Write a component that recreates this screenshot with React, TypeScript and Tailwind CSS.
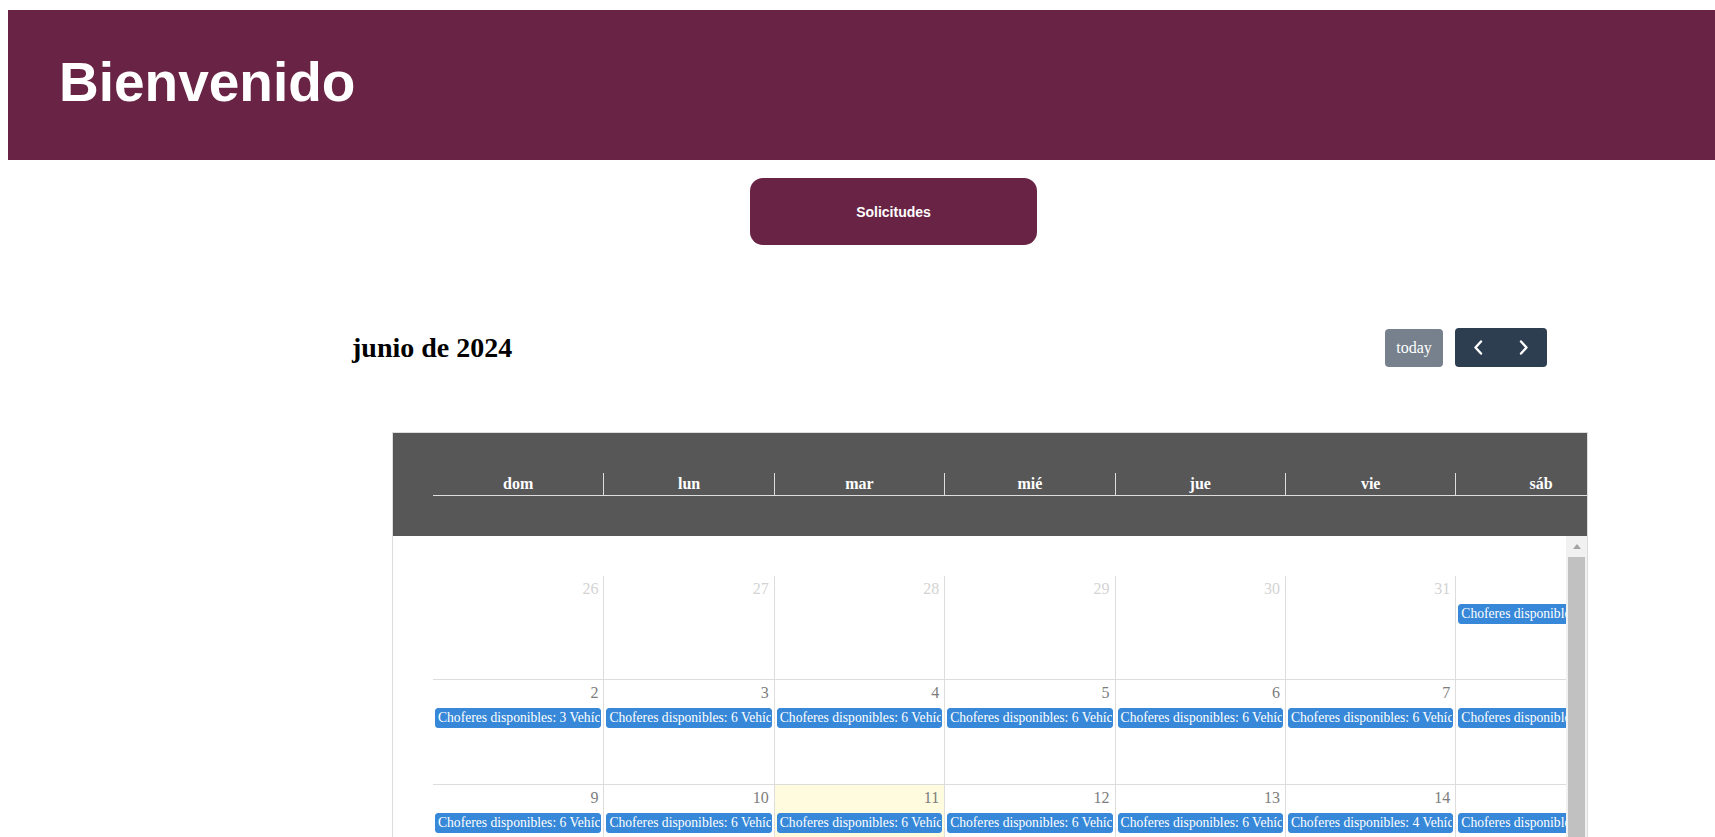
const weekDays = ['dom', 'lun', 'mar', 'mié', 'jue', 'vie', 'sáb']

type Day = { n: number; other?: boolean; today?: boolean; ev?: number }

const weeks: Day[][] = [
	[{ n: 26, other: true }, { n: 27, other: true }, { n: 28, other: true }, { n: 29, other: true }, { n: 30, other: true }, { n: 31, other: true }, { n: 1, ev: 6 }],
	[{ n: 2, ev: 3 }, { n: 3, ev: 6 }, { n: 4, ev: 6 }, { n: 5, ev: 6 }, { n: 6, ev: 6 }, { n: 7, ev: 6 }, { n: 8, ev: 6 }],
	[{ n: 9, ev: 6 }, { n: 10, ev: 6 }, { n: 11, ev: 6, today: true }, { n: 12, ev: 6 }, { n: 13, ev: 6 }, { n: 14, ev: 4 }, { n: 15, ev: 6 }],
	[{ n: 16, ev: 6 }, { n: 17, ev: 6 }, { n: 18, ev: 6 }, { n: 19, ev: 6 }, { n: 20, ev: 6 }, { n: 21, ev: 6 }, { n: 22, ev: 6 }],
	[{ n: 23, ev: 6 }, { n: 24, ev: 6 }, { n: 25, ev: 6 }, { n: 26, ev: 6 }, { n: 27, ev: 6 }, { n: 28, ev: 6 }, { n: 29, ev: 6 }],
	[{ n: 30, ev: 6 }, { n: 1, other: true }, { n: 2, other: true }, { n: 3, other: true }, { n: 4, other: true }, { n: 5, other: true }, { n: 6, other: true }],
]

function Chevron({ dir }: { dir: 'left' | 'right' }) {
	return (
		<svg width="10" height="15" viewBox="0 0 10 15" fill="none">
			<path
				d={dir === 'left' ? 'M8 1.5 L2.5 7.5 L8 13.5' : 'M2 1.5 L7.5 7.5 L2 13.5'}
				stroke="white"
				strokeWidth="2.4"
				strokeLinecap="round"
				strokeLinejoin="round"
			/>
		</svg>
	)
}

function DayCell({ day, first }: { day: Day; first: boolean }) {
	return (
		<div
			className={`flex h-full w-[170.4px] shrink-0 flex-col ${first ? '' : 'border-l border-[#ddd]'} ${day.today ? 'bg-[#fffbdf]' : ''}`}
		>
			<div className={`pt-[1px] pr-[5px] text-right text-[16px] leading-6 ${day.other ? 'text-[#d3d3d3]' : 'text-[#7d7d7d]'}`}>
				{day.n}
			</div>
			{day.ev !== undefined && (
				<div className="mx-[2px] mt-[3px] h-[20px] overflow-hidden rounded-[3px] border border-[#3788d8] bg-[#3788d8] px-[2px] text-[13.6px] leading-[18px] whitespace-nowrap text-white">
					Choferes disponibles: {day.ev} Vehículos disponibles: {day.ev}
				</div>
			)}
		</div>
	)
}

export default function App() {
	return (
		<div className="min-h-[837px] bg-white pb-10 font-['Liberation_Serif','Times_New_Roman',serif] text-black">
			<header className="mt-[10px] ml-[8px] h-[150px] bg-[#692445] pt-[44px] pl-[51px]">
				<h1 className="font-['Liberation_Sans',Arial,sans-serif] text-[55px] leading-[56px] font-bold text-white">
					Bienvenido
				</h1>
			</header>

			<div className="mt-[18px] flex justify-center pl-[72px]">
				<button className="h-[67px] w-[287px] rounded-[13px] bg-[#692445] pt-[2px] font-['Liberation_Sans',Arial,sans-serif] text-[14px] font-bold text-white">
					Solicitudes
				</button>
			</div>

			<div className="mt-[83px] ml-[352px] flex h-[39px] w-[1195px] items-center justify-between">
				<h2 className="text-[28px] leading-[1.2] font-bold">junio de 2024</h2>
				<div className="flex items-center gap-[12px]">
					<button className="flex h-[38px] w-[58px] items-center justify-center rounded-[4px] bg-[#76818d] text-[16px] text-white">
						today
					</button>
					<div className="flex h-[39px] w-[92px] overflow-hidden rounded-[4px] bg-[#2c3e50]">
						<button className="flex flex-1 items-center justify-center">
							<Chevron dir="left" />
						</button>
						<button className="flex flex-1 items-center justify-center">
							<Chevron dir="right" />
						</button>
					</div>
				</div>
			</div>

			<div className="mt-[65px] ml-[392px] w-[1196px] overflow-hidden border border-[#ddd]">
				<div className="h-[103px] overflow-hidden bg-[#575757] pt-[40px]">
					<div className="flex w-[1240px] pl-[40px]">
						<div className="flex border-b border-[#ddd]">
							{weekDays.map((d, i) => (
								<div
									key={d}
									className={`h-[22px] w-[170.4px] shrink-0 text-center text-[16px] leading-[22px] font-bold text-white ${i === 0 ? '' : 'border-l border-[#ddd]'}`}
								>
									{d}
								</div>
							))}
						</div>
					</div>
				</div>

				<div className="flex h-[420px]">
					<div className="flex-1 overflow-hidden pt-[40px]">
						<div className="w-[1240px] pl-[40px]">
							{weeks.map((w, ri) => (
								<div key={ri} className={`flex ${ri === 0 ? 'h-[103px]' : 'h-[105px] border-t border-[#ddd]'}`}>
									{w.map((d, ci) => (
										<DayCell key={ci} day={d} first={ci === 0} />
									))}
								</div>
							))}
						</div>
					</div>
					<div className="flex w-[21px] shrink-0 flex-col items-center bg-[#f1f1f1]">
						<div className="flex h-[21px] items-center justify-center">
							<div className="h-0 w-0 border-x-[4.5px] border-b-[5px] border-x-transparent border-b-[#a3a3a3]" />
						</div>
						<div className="h-[300px] w-[17px] bg-[#c1c1c1]" />
					</div>
				</div>
			</div>
		</div>
	)
}
